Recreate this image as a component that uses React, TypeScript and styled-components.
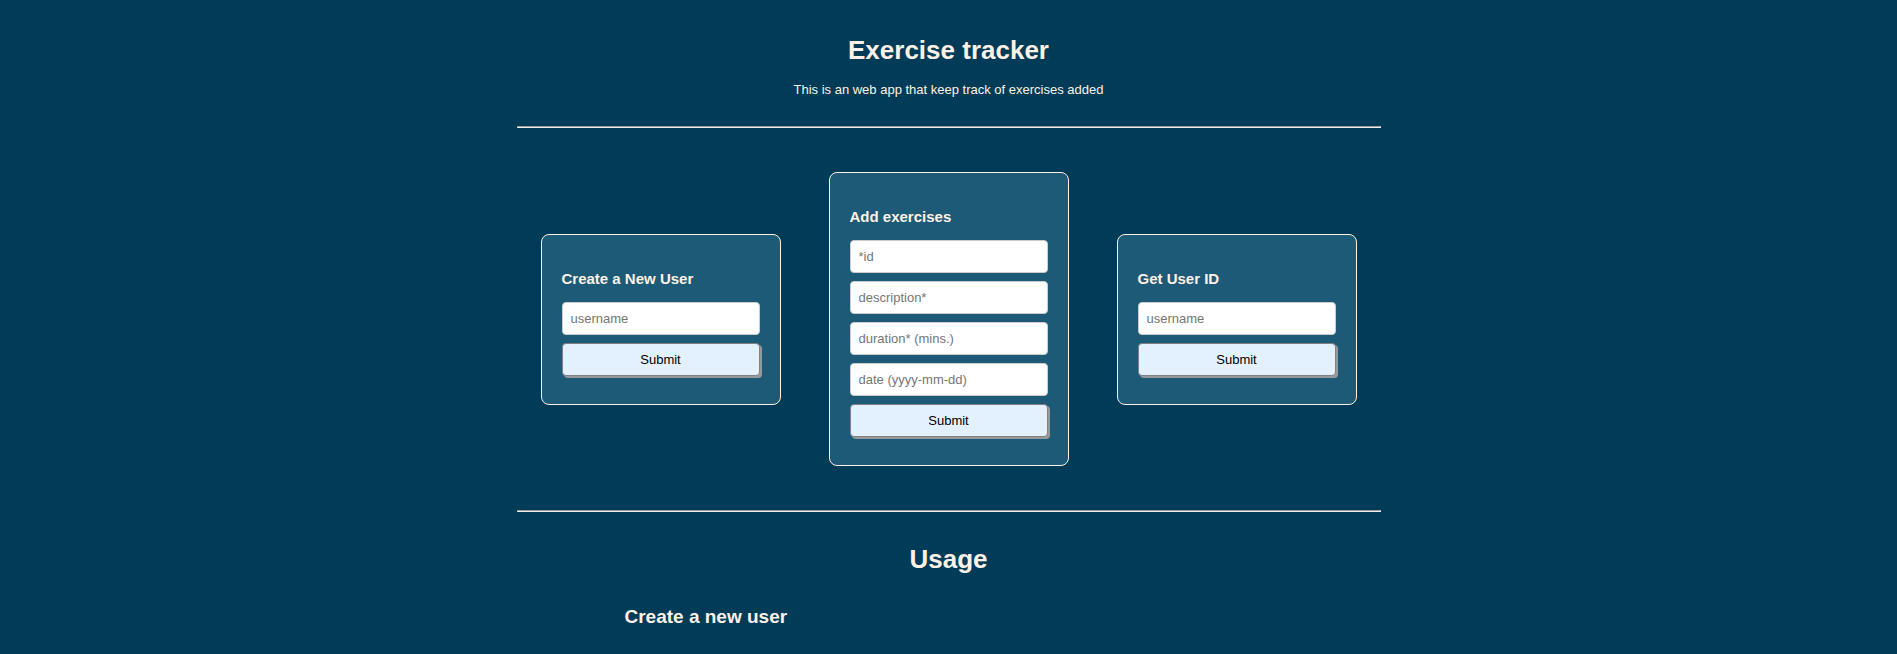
import React from "react";
import styled, { createGlobalStyle } from "styled-components";

const GlobalStyle = createGlobalStyle`
  * { box-sizing: border-box; }
  body {
    margin: 0;
    background: #003c58;
    color: #fff1e6;
    font-family: "Liberation Sans", Arial, sans-serif;
    font-size: 13px;
  }
`;

const Page = styled.main`
  max-width: 864px;
  margin: 0 auto;
`;

const Header = styled.header`
  padding: 34px 0 29px;
  text-align: center;
`;

const Title = styled.h1`
  margin: 0;
  font-size: 26px;
  line-height: 32px;
  text-align: center;
`;

const Intro = styled.p`
  margin: 16px 0 0;
  line-height: 15px;
`;

const Divider = styled.hr`
  margin: 0;
  border: 1px solid #eeeeee;
  border-color: #a09a9a #eeeeee #eeeeee #a09a9a;
`;

const Forms = styled.section`
  display: flex;
  flex-wrap: wrap;
  align-items: center;
  justify-content: space-between;
  gap: 24px;
  padding: 44px 24px;
`;

const Card = styled.form`
  display: flex;
  flex-direction: column;
  gap: 8px;
  width: 240px;
  padding: 34px 20px 28px;
  border: 1px solid #fff1e6;
  border-radius: 8px;
  background: #1d5a78;
`;

const CardTitle = styled.h2`
  margin: 0 0 5px;
  font-size: 15px;
  line-height: 20px;
`;

const Field = styled.input`
  width: 100%;
  height: 33px;
  padding: 0 8px;
  border: 1px solid #cccccc;
  border-radius: 4px;
  background: #ffffff;
  font: inherit;
`;

const Submit = styled.button`
  width: 100%;
  height: 33px;
  border: 1px solid #808080;
  border-radius: 4px;
  background: #e3f1ff;
  box-shadow: 2px 2px 0 #999999;
  color: #000000;
  font: inherit;
`;

const Usage = styled.section`
  padding: 31px 0 24px;
`;

const UsageTitle = styled.h3`
  margin: 30px 108px 0;
  font-size: 19px;
  line-height: 24px;
`;

type EntryFormProps = { title: string; fields: string[] };

function EntryForm({ title, fields }: EntryFormProps) {
  return (
    <Card onSubmit={(event) => event.preventDefault()}>
      <CardTitle>{title}</CardTitle>
      {fields.map((field) => (
        <Field key={field} type="text" placeholder={field} aria-label={field} />
      ))}
      <Submit type="submit">Submit</Submit>
    </Card>
  );
}

export default function App() {
  return (
    <>
      <GlobalStyle />
      <Page>
        <Header>
          <Title>Exercise tracker</Title>
          <Intro>This is an web app that keep track of exercises added</Intro>
        </Header>
        <Divider />
        <Forms>
          <EntryForm title="Create a New User" fields={["username"]} />
          <EntryForm
            title="Add exercises"
            fields={["*id", "description*", "duration* (mins.)", "date (yyyy-mm-dd)"]}
          />
          <EntryForm title="Get User ID" fields={["username"]} />
        </Forms>
        <Divider />
        <Usage>
          <Title as="h2">Usage</Title>
          <UsageTitle>Create a new user</UsageTitle>
        </Usage>
      </Page>
    </>
  );
}
